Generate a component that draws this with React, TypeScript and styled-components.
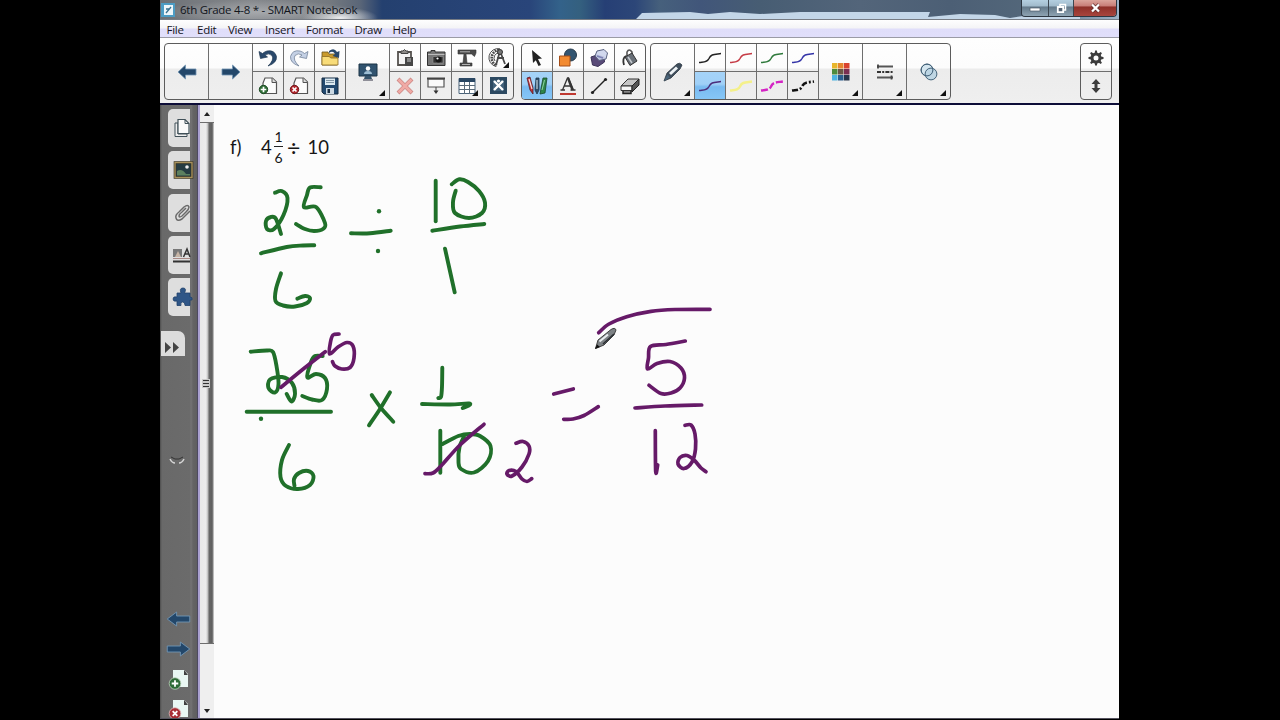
import React from 'react';
import styled, { createGlobalStyle } from 'styled-components';

const GlobalStyle = createGlobalStyle`
  * { box-sizing: border-box; }
  body { margin: 0; background: #000; }
  svg { display: block; overflow: visible; }
`;

const Stage = styled.div`
  display: flex;
  justify-content: center;
  width: 1280px;
  height: 720px;
  overflow: hidden;
  background: #000;
`;

const AppWindow = styled.div`
  display: flex;
  flex-direction: column;
  width: 960px;
  height: 720px;
  background: #fcfcfc;
  border-right: 1px solid #000;
  font-family: 'Open Sans', 'Noto Sans', sans-serif;
`;

/* ---------- title bar ---------- */

const TitleBar = styled.header`
  position: relative;
  display: flex;
  align-items: center;
  height: 20px;
  border-bottom: 1px solid #777c84;
  background:
    radial-gradient(ellipse 100px 12px at 100px 12px, rgba(190, 192, 195, 0.6), transparent),
    radial-gradient(ellipse 38px 11px at 180px 18px, rgba(245, 246, 247, 0.95), transparent),
    linear-gradient(90deg, #6d7176 0, #85888c 90px, #74797f 170px, #5a6678 200px, #24406f 222px,
      #29457a 370px, #33628a 400px, #34607f 420px, #263f75 445px, #2c4678 475px, #46607c 500px,
      #41567a 540px, #475d73 600px, #53657a 700px, #4c5f75 790px, #53677a 870px, #9eb4c8 960px);
`;

const TitleGlow = styled.svg`
  position: absolute;
  left: 0;
  bottom: 0;
`;

const TitleIcon = styled.svg`
  position: relative;
  margin-left: 1px;
`;

const TitleText = styled.span`
  position: relative;
  flex: 1;
  margin-left: 5px;
  font-size: 11.5px;
  line-height: 19px;
  letter-spacing: -0.27px;
  white-space: pre;
  color: #11151c;
`;

const WindowButtons = styled.div`
  position: relative;
  display: flex;
  align-self: flex-start;
  height: 17px;
  margin-right: 2px;
  border: 1px solid #2d3742;
  border-top: 0;
  border-radius: 0 0 4px 4px;
  overflow: hidden;
`;

const WindowButton = styled.div<{ $w: number; $close?: boolean }>`
  display: flex;
  align-items: center;
  justify-content: center;
  width: ${(p) => p.$w}px;
  border-left: ${(p) => (p.$w === 26 ? 0 : 1)}px solid #3c4650;
  background: ${(p) =>
    p.$close
      ? 'linear-gradient(#dba59c 0, #c9807a 35%, #8f3029 45%, #a8453d 100%)'
      : 'linear-gradient(#b4cfe0 0, #a2bccd 35%, #647a8b 45%, #8ea3b2 100%)'};
`;

/* ---------- menu ---------- */

const MenuBar = styled.nav`
  display: flex;
  height: 18px;
  padding-left: 6.5px;
  border-bottom: 1px solid #9b9ba6;
  background: linear-gradient(#fefefe 0, #f4f4f6 8px, #e0defa 9px, #e1dffb 17px);
`;

const MenuItem = styled.span<{ $w: number }>`
  width: ${(p) => p.$w}px;
  font-size: 11.5px;
  line-height: 19px;
  letter-spacing: -0.25px;
  white-space: nowrap;
  color: #14141a;
`;

/* ---------- toolbar ---------- */

const Toolbar = styled.div`
  display: flex;
  height: 67px;
  padding: 5px 7px 0 4px;
  border-bottom: 2px solid #0d0d38;
  background: linear-gradient(#fefefe 0, #fcfcfc 30px, #ececec 31px, #efefef 100%);
`;

const ToolGroup = styled.div<{ $gap?: string }>`
  display: flex;
  height: 57px;
  margin-left: ${(p) => p.$gap || '0'};
  border: 1px solid #5c5c5c;
  border-radius: 4px;
  overflow: hidden;
`;

const LargeTool = styled.div<{ $first?: boolean }>`
  position: relative;
  display: flex;
  align-items: center;
  justify-content: center;
  width: ${(p) => (p.$first ? 43 : 44)}px;
  border-left: ${(p) => (p.$first ? 0 : 1)}px solid #6e6e6e;
`;

const ToolColumn = styled.div<{ $first?: boolean }>`
  display: flex;
  flex-direction: column;
  width: ${(p) => (p.$first ? 30 : 31)}px;
  border-left: ${(p) => (p.$first ? 0 : 1)}px solid #6e6e6e;
`;

const SmallTool = styled.div<{ $active?: boolean }>`
  position: relative;
  display: flex;
  align-items: center;
  justify-content: center;
  height: 27px;
  background: ${(p) => (p.$active ? 'linear-gradient(#a5d3f8 0, #a0d0f7 45%, #79bbf1 55%, #86c6f7 100%)' : 'transparent')};
  & + & {
    height: 28px;
    border-top: 1px solid #6e6e6e;
  }
`;

const Corner = styled.i`
  position: absolute;
  right: 4px;
  bottom: 3px;
  border-style: solid;
  border-width: 0 0 6px 6px;
  border-color: transparent transparent #111 transparent;
`;

/* ---------- workspace ---------- */

const Workspace = styled.div`
  display: flex;
  height: 613px;
`;

const Sidebar = styled.aside`
  display: flex;
  flex-direction: column;
  width: 38px;
  padding-top: 4px;
  background: linear-gradient(90deg, #4d4d4d 0, #696969 2px, #6b6b6b 30px, #747474 31px, #646464 33px, #5f5f5f 37px, #3a3560 38px);
`;

const SideTab = styled.div`
  display: flex;
  align-items: center;
  justify-content: flex-end;
  width: 22px;
  height: 38px;
  margin: 0 0 4.3px 8px;
  border-radius: 5px 0 0 5px;
  background: #dedede;
`;

const Expander = styled.div`
  display: flex;
  align-items: center;
  width: 24px;
  height: 25px;
  margin: 11px 0 0 1px;
  padding: 8px 0 0 4px;
  border-radius: 0 7px 0 0;
  background: #dcdcdc;
`;

const DragMark = styled.div`
  margin: 99px 0 0 10px;
`;

const PageTurns = styled.div`
  display: flex;
  flex-direction: column;
  gap: 14px;
  margin: auto 0 13px 6px;
`;

const PageActions = styled.div`
  display: flex;
  flex-direction: column;
  gap: 10px;
  margin: 0 0 -2px 8px;
`;

const ScrollRail = styled.div`
  display: flex;
  flex-direction: column;
  align-items: center;
  width: 16px;
  border-left: 2px solid #a9a0cf;
  background: #efefef;
`;

const ScrollArrow = styled.div<{ $down?: boolean }>`
  width: 0;
  height: 0;
  margin: ${(p) => (p.$down ? 'auto 0 5px' : '7px 0 6px')};
  border: 3px solid transparent;
  border-width: ${(p) => (p.$down ? '4px 3px 0' : '0 3px 4px')};
  border-${(p) => (p.$down ? 'top' : 'bottom')}-color: #222;
`;

const ScrollThumb = styled.div`
  display: flex;
  flex-direction: column;
  align-items: center;
  justify-content: center;
  width: 14px;
  height: 522px;
  padding-right: 2px;
  border-top: 1px solid #6d6d6d;
  border-bottom: 1px solid #6d6d6d;
  background: linear-gradient(90deg, #e9e9e9 0, #ededed 6px, #b8b8b8 8px, #686868 9px, #606060 12px, #888 13px, #eee 14px);
`;

const Grip = styled.div`
  display: flex;
  flex-direction: column;
  gap: 2px;
  padding: 1px;
  width: 8px;
  background: #c9c9c9;
`;

const GripLine = styled.i`
  height: 1px;
  background: #333;
`;

const Page = styled.main`
  position: relative;
  flex: 1;
  padding: 25px 0 0 16px;
  background: #fcfcfc;
`;

const Problem = styled.div`
  display: flex;
  align-items: center;
  height: 34px;
  font-family: Lato, sans-serif;
  font-size: 18.5px;
  line-height: 34px;
  color: #161616;
`;

const Label = styled.span<{ $w: number; $size?: number }>`
  width: ${(p) => p.$w}px;
  font-size: ${(p) => p.$size || 18.5}px;
  white-space: nowrap;
`;

const Fraction = styled.span`
  display: flex;
  flex-direction: column;
  align-items: center;
  width: 9px;
  margin: 0 4px 0 2px;
  font-size: 14px;
  line-height: 16px;
`;

const FractionBar = styled.i`
  width: 9px;
  height: 1px;
  margin: 1px 0 3px;
  background: #222;
`;

const Ink = styled.svg`
  position: absolute;
  inset: 0;
`;

const BottomEdge = styled.footer`
  height: 2px;
  background: linear-gradient(#55535f 1px, #000 1px);
`;

/* ---------- icons ---------- */

const NAVY = '#23476a';

const ArrowIcon = ({ flip, w = 20 }: { flip?: boolean; w?: number }) => (
  <svg width={w} height={16} viewBox="0 0 20 16" preserveAspectRatio="none">
    <path
      transform={flip ? 'translate(20 0) scale(-1 1)' : undefined}
      d="M1 8 8.5 1V5H19V11H8.5V15Z"
      fill={NAVY}
      stroke="#7195b4"
      strokeWidth=".8"
    />
  </svg>
);

const UndoIcon = ({ redo }: { redo?: boolean }) => (
  <svg width="20" height="20" viewBox="0 0 20 20">
    <g transform={redo ? 'translate(20 0) scale(-1 1)' : undefined}>
      <path
        d="M1 3.5 2.5 10.500 9.500 9 7 7Q11 4.500 14 7.500 16.500 12 10 18 19 15 18.500 8.500 16.500 1.500 9 3 6.500 3.700 4.500 5.500Z"
        fill={redo ? '#c4d0e4' : '#29486b'}
        stroke={redo ? '#65778f' : '#1f3852'}
        strokeWidth=".7"
      />
    </g>
  </svg>
);

const FolderIcon = () => (
  <svg width="20" height="20" viewBox="0 0 20 20">
    <path d="M2 4H8L9 6H17V17H2Z" fill="#c99a2c" stroke="#6b551f" strokeWidth=".8" />
    <path d="M9 3Q14-1 17 4L19.500 3 19 10 12.500 8 15 6Q13 2 9 5Z" fill="#29486b" />
    <path d="M2 17V8.500H9L11 10H18V17Z" fill="#f8dc79" stroke="#8a6b22" strokeWidth=".8" />
  </svg>
);

const PageIcon = ({ remove }: { remove?: boolean }) => (
  <svg width="20" height="20" viewBox="0 0 20 20">
    <path d="M7 2H14.500L18.500 6V17.500H5V7Z" fill="#fcfcfc" stroke="#555" strokeWidth="1.2" />
    <path d="M14 2V6.500H18.500" fill="#ddd" stroke="#555" />
    <circle cx="5.500" cy="13.500" r="4.200" fill={remove ? '#b3262c' : '#2f6e36'} stroke={remove ? '#70181c' : '#1d4b24'} />
    <path
      d="M5.500 10.700V16.300M2.700 13.500H8.300"
      transform={remove ? 'rotate(45 5.500 13.500)' : undefined}
      stroke="#fff"
      strokeWidth="1.7"
    />
  </svg>
);

const SidePageIcon = ({ remove }: { remove?: boolean }) => (
  <svg width="20" height="20" viewBox="0 0 20 20">
    <path d="M5 0H16L20 4V17H5Z" fill="#e9f7f3" />
    <path d="M16 0V5H20Z" fill="#404040" />
    <circle cx="7" cy="13.500" r="5.800" fill={remove ? '#a92f35' : '#2f6b38'} stroke={remove ? '#ddb9ba' : '#bad0b9'} strokeWidth=".8" />
    <path d="M7 10.200V16.800M3.700 13.500H10.300" transform={remove ? 'rotate(45 7 13.500)' : undefined} stroke="#fff" strokeWidth="1.8" />
  </svg>
);

const SaveIcon = () => (
  <svg width="18" height="18" viewBox="0 0 18 18">
    <path d="M1 1H17V17H3L1 15Z" fill="#234a70" stroke="#162c42" />
    <path d="M4 1.500H14V8H4Z" fill="#dce9f0" />
    <path d="M5 3.500H13M5 5.500H13" stroke="#8095a5" />
    <path d="M5 11H13V17H5Z" fill="#ccd9e3" />
    <path d="M6.500 12H9V16H6.500Z" fill="#182d42" />
  </svg>
);

const ScreenIcon = () => (
  <svg width="20" height="18" viewBox="0 0 20 18">
    <path d="M1 1H19V13H1Z" fill="#31536f" stroke="#1d3447" />
    <path d="M7 13H13L14 16H6Z" fill="#36536a" />
    <circle cx="10" cy="5.500" r="2.200" fill="#fff" />
    <path d="M6 11Q6 8 10 8 14 8 14 11Z" fill="#9dbdd2" />
    <path d="M5 17H15" stroke="#334" />
  </svg>
);

const PasteIcon = () => (
  <svg width="20" height="20" viewBox="0 0 20 20">
    <path d="M3 4H16V17H3Z" fill="#f4f4f4" stroke="#55524e" strokeWidth="1.800" />
    <path d="M6 5.500V3H8Q9.500 0 11 3H13V5.500Z" fill="#8d8b88" stroke="#444" />
    <path d="M10 9H18V18H10Z" fill="#464646" />
    <path d="M12 11H16M12 13H16" stroke="#ccc" />
  </svg>
);

const CameraIcon = () => (
  <svg width="20" height="20" viewBox="0 0 20 20">
    <path d="M1.500 4H5V2.500H9V4H19V17.500H1.500Z" fill="#777" stroke="#333" />
    <path d="M2 6.500H18.500" stroke="#bbb" />
    <path d="M7 8.500H17V15H7Z" fill="#333" stroke="#999" strokeWidth=".6" />
    <circle cx="12.500" cy="11.500" r="3" fill="#161616" />
    <circle cx="11.500" cy="10.500" r="1.100" fill="#fff" />
  </svg>
);

const DocCamIcon = () => (
  <svg width="20" height="20" viewBox="0 0 20 20">
    <path d="M1 2H19V5L17.500 8.500 14.500 6H9L10 15H15V18H3V15H6L7 6H1Z" fill="#4a4a4a" stroke="#333" strokeWidth=".6" />
    <path d="M5 16.500H13M3 3.800H13" stroke="#c9c9c9" strokeWidth=".8" />
  </svg>
);

const MeasureIcon = () => (
  <svg width="22" height="20" viewBox="0 0 22 20">
    <g fill="none" stroke="#4a4a4a">
      <path d="M12 2A8 8 0 0 0 10 17.500" strokeWidth="2.600" strokeDasharray="1.800 .8" />
      <path d="M13 .8A9 9 0 0 0 9 18.500M12 5A5 5 0 0 0 8 13" strokeWidth="1" />
      <path d="M13 3 9 17M13 3 18 16M10 10H17" strokeWidth="1.800" />
    </g>
    <circle cx="13" cy="4" r="2.500" fill="#777" stroke="#333" />
  </svg>
);

const DeleteIcon = () => (
  <svg width="18" height="18" viewBox="0 0 18 18">
    <path d="M2 2 16 16M16 2 2 16" stroke="#c98480" strokeWidth="4" />
    <path d="M2.500 2.500 15.500 15.500M15.500 2.500 2.500 15.500" stroke="#f0aaa5" strokeWidth="2.800" />
  </svg>
);

const ShadeIcon = () => (
  <svg width="20" height="20" viewBox="0 0 20 20">
    <path d="M2 3H18V11H2Z" fill="#fafafa" stroke="#555" strokeWidth="1.200" />
    <path d="M1 2.500H19" stroke="#444" strokeWidth="2" />
    <path d="M10 11V16" stroke="#444" />
    <path d="M7.500 14.500H12.500L10 18Z" fill="#333" />
  </svg>
);

const TableIcon = () => (
  <svg width="18" height="18" viewBox="0 0 18 18">
    <path d="M1 1.500H17V16.500H1Z" fill="#fff" stroke="#49637a" />
    <path d="M1 1H17V5H1Z" fill="#2a4763" />
    <path d="M1 8.500H17M1 12.500H17M6.500 5V17M11.500 5V17" stroke="#5a6b79" />
  </svg>
);

const AddOnIcon = () => (
  <svg width="17" height="17" viewBox="0 0 17 17">
    <path d="M0 0H17V17H0Z" fill="#2c4961" />
    <path d="M3 3H14V14H3Z" fill="#41617a" />
    <path d="M4 4 13 13M13 4 4 13" stroke="#fff" strokeWidth="2.400" />
    <circle cx="8.500" cy="4" r="1.600" fill="#fff" />
  </svg>
);

const CursorIcon = () => (
  <svg width="14" height="18" viewBox="0 0 14 18">
    <path d="M2 1 12 9.500 8 10 11 16 8.500 17 5.800 11.200 3 14Z" fill="#222" />
  </svg>
);

const ShapesIcon = () => (
  <svg width="20" height="20" viewBox="0 0 20 20">
    <circle cx="12.500" cy="7" r="6" fill="#335571" stroke="#26394a" />
    <path d="M1.500 8H12V18H1.500Z" fill="#f28a30" stroke="#a44e18" />
  </svg>
);

const PolygonsIcon = () => (
  <svg width="20" height="20" viewBox="0 0 20 20">
    <path d="M2 9 8 7 15 9 15.500 14 9 18.500 3.500 17Z" fill="#594b78" stroke="#3c3358" />
    <path d="M8 3 15 1.500 18.500 5 17 11 10 12.500 6 8Z" fill="#ccd4ec" fillOpacity=".9" stroke="#58617f" />
    <path d="M8 8 14 10" fill="none" stroke="#7a80b4" strokeWidth="1.400" />
  </svg>
);

const FillIcon = () => (
  <svg width="20" height="20" viewBox="0 0 20 20">
    <path d="M7 8V4Q9 0 12 4V9" fill="none" stroke="#555" strokeWidth="1.600" />
    <path d="M5 9 12 5 17 13 10 17.500Z" fill="#697078" stroke="#333" />
    <path d="M8 9 12 15" stroke="#c6cbd0" strokeWidth="1.500" />
    <path d="M6 8Q2 10 4 17" fill="none" stroke="#333" strokeWidth="1.800" />
  </svg>
);

const PensIcon = () => (
  <svg width="22" height="20" viewBox="0 0 22 20">
    <path d="M1 2 4 1 7 12 7 18 4 14Z" fill="#bf3038" stroke="#592026" strokeWidth=".8" />
    <path d="M3 3 6 13" stroke="#f4dede" strokeWidth="1.200" />
    <path d="M10 2H13V14L11 18 9 14Z" fill="#34516d" stroke="#20394f" strokeWidth=".8" />
    <path d="M11 4V13" stroke="#dce8ef" />
    <path d="M17 2 21 2 19 17 14 18Z" fill="#2e8549" stroke="#17472a" strokeWidth=".8" />
    <path d="M18.500 4 16 14" stroke="#8fd3a4" />
  </svg>
);

const TextToolIcon = () => (
  <svg width="18" height="20" viewBox="0 0 18 20">
    <path d="M3.500 14 8.500 2 9.500 2 14.500 14M5.500 10H12M1.500 14H6M11.500 14H16.500" fill="none" stroke="#333" strokeWidth="1.300" />
    <path d="M9 2 13.500 14" stroke="#333" strokeWidth="2.200" />
    <path d="M1 18H17" stroke="#c03a32" strokeWidth="2" />
  </svg>
);

const LineIcon = () => (
  <svg width="18" height="18" viewBox="0 0 18 18">
    <path d="M2 16 16 2" stroke="#222" strokeWidth="1.400" />
    <circle cx="2.500" cy="15.500" r="1.600" fill="#222" />
    <circle cx="15.500" cy="2.500" r="1.600" fill="#222" />
  </svg>
);

const EraserIcon = () => (
  <svg width="20" height="18" viewBox="0 0 20 18">
    <path d="M8 2H19L12 9H1Z" fill="#c6c6c6" stroke="#333" />
    <path d="M1 9H12V13.500H1Z" fill="#f5f5f5" stroke="#333" />
    <path d="M12 9 19 2V8L12 15Z" fill="#555" stroke="#222" />
    <path d="M3 14V16.500H11V14" stroke="#222" strokeWidth="1.500" fill="#888" />
  </svg>
);

const PenIcon = () => (
  <svg width="20" height="20" viewBox="0 0 20 20">
    <path d="M1 19 4 11 14 2Q17 0 19 3L17 7 8 16Z" fill="#3f4e5c" stroke="#2d3741" strokeWidth=".8" />
    <path d="M7 12 14 5.500" stroke="#eef3f6" strokeWidth="3" />
    <path d="M1 19 4.500 12.500 7 15.500Z" fill="#4a647a" />
  </svg>
);

const Squiggle = ({ color, w = 1.5, dash }: { color: string; w?: number; dash?: string }) => (
  <svg width="24" height="12" viewBox="0 0 24 12">
    <path
      d="M1 10.500C6 9.800 9 10.500 11 6.500 13 2 16 2.500 23 1.500"
      fill="none"
      stroke={color}
      strokeWidth={w}
      strokeDasharray={dash}
    />
  </svg>
);

const SWATCHES = ['#e8b62c', '#e5862f', '#d9432f', '#4d8b3c', '#6b5646', '#7a2f52', '#4fb4e0', '#2c5f8f', '#27354b'];

const PaletteIcon = () => (
  <svg width="18" height="18" viewBox="0 0 18 18">
    {SWATCHES.map((c, i) => (
      <rect key={c} x={(i % 3) * 6} y={Math.floor(i / 3) * 6} width="5.500" height="5.500" fill={c} />
    ))}
  </svg>
);

const LineStyleIcon = () => (
  <svg width="18" height="16" viewBox="0 0 18 16">
    <path d="M1 2.500H17M1 13.500H17" stroke="#555" strokeWidth="1.800" />
    <path d="M1 8H17" stroke="#333" strokeWidth="1.900" strokeDasharray="4 1.200 2 1.200" />
    <path d="M2 .5V4.500M15.500 11.500V15.500" stroke="#444" strokeWidth="1.800" />
  </svg>
);

const OverlapIcon = () => (
  <svg width="18" height="18" viewBox="0 0 18 18">
    <circle cx="7" cy="7" r="5.900" fill="#d5e6ef" stroke="#44637a" />
    <circle cx="11" cy="11" r="5.900" fill="#b4d1e1" fillOpacity=".8" stroke="#44637a" />
    <circle cx="7" cy="7" r="5.900" fill="none" stroke="#44637a" />
  </svg>
);

const GearIcon = () => (
  <svg width="16" height="16" viewBox="0 0 16 16">
    <circle cx="8" cy="8" r="4" fill="none" stroke="#3c3c3c" strokeWidth="3" />
    {[0, 45, 90, 135, 180, 225, 270, 315].map((a) => (
      <path key={a} d="M6.600 3.500 7.100.5H8.900L9.400 3.500Z" fill="#3c3c3c" transform={`rotate(${a} 8 8)`} />
    ))}
  </svg>
);

const MoveIcon = () => (
  <svg width="12" height="16" viewBox="0 0 12 16">
    <path d="M6 1 10.500 6H7.500V10H10.500L6 15 1.500 10H4.500V6H1.500Z" fill="#3c3c3c" />
  </svg>
);

const PagesTabIcon = () => (
  <svg width="16" height="20" viewBox="0 0 16 20">
    <path d="M1 5H4V16H13V18.500H1Z" fill="#eee" stroke="#405058" />
    <path d="M4 1.500H11L15 5.500V15.500H4Z" fill="#fafafa" stroke="#405058" strokeWidth="1.200" />
    <path d="M11 1.500V5.500H15" fill="none" stroke="#405058" />
  </svg>
);

const GalleryTabIcon = () => (
  <svg width="16" height="18" viewBox="0 0 16 18">
    <path d="M1 1.500H18V16.500H1Z" fill="#253c42" stroke="#2f2b20" strokeWidth="2.600" />
    <path d="M1 1.500H18V16.500H1Z" fill="none" stroke="#a8925c" strokeWidth="1.400" />
    <path d="M3 10Q8 7 12 13L16 13V14.500H3Z" fill="#5c805f" />
    <circle cx="13" cy="6" r="1.800" fill="#eee" />
  </svg>
);

const ClipTabIcon = () => (
  <svg width="16" height="18" viewBox="0 0 16 18">
    <path
      d="M16 7 8 15Q3 18 2 14 1 11 5 8L10 3Q14 0 15 3 15 5 12 8L8 12Q5 14 5 12 5 10 8 8L12 4"
      fill="none"
      stroke="#6a6a6a"
      strokeWidth="1.500"
    />
  </svg>
);

const PropertiesTabIcon = () => (
  <svg width="17" height="18" viewBox="0 0 17 18">
    <path d="M0 3H9V11H0Z" fill="#777" />
    <path d="M2 11 5 5 8 11Z" fill="#c6b4a5" />
    <path d="M10.500 11 14 3 17 11M11.500 8H16" fill="none" stroke="#333" strokeWidth="1.500" />
    <path d="M0 12.500H17" stroke="#a98985" />
    <path d="M0 15.500H17" stroke="#333" strokeWidth="2" />
  </svg>
);

const PuzzleTabIcon = () => (
  <svg width="17" height="20" viewBox="0 0 17 20">
    <path
      d="M4 6H8Q6 1 10 1 14 1 11.500 6H17V10Q20 10 19 13L17 13V18.500H12Q12 15 9.500 15 7 15 8 18.500H4V14Q0 15 0 12 0 9 4 10Z"
      fill="#2f5687"
      stroke="#21436c"
      strokeWidth=".8"
    />
  </svg>
);

/* ---------- handwriting ---------- */

type Point = [number, number];

// Catmull-Rom through the sampled pen positions.
const smooth = (pts: Point[]) => {
  let d = `M${pts[0][0]} ${pts[0][1]}`;
  for (let i = 0; i < pts.length - 1; i++) {
    const a = pts[i - 1] || pts[i];
    const b = pts[i];
    const c = pts[i + 1];
    const e = pts[i + 2] || c;
    d += `C${b[0] + (c[0] - a[0]) / 6} ${b[1] + (c[1] - a[1]) / 6} ${c[0] - (e[0] - b[0]) / 6} ${c[1] - (e[1] - b[1]) / 6} ${c[0]} ${c[1]}`;
  }
  return d;
};

const GREEN: Point[][] = [
  [[275, 192.7], [281.700, 191], [287.500, 198], [283.500, 215], [274, 229], [267, 229], [266, 221], [271, 217], [276, 219], [281, 234]],
  [[320.700, 187.300], [310, 187.500], [307, 195], [304, 207.300], [316, 207], [325, 223], [323, 229], [314, 231], [305, 229], [296, 224]],
  [[261, 253.300], [286.700, 247], [303, 245.500], [314.300, 245.300]],
  [[351, 233.300], [370, 233.300], [390.700, 230.700]],
  [[435.700, 180.700], [435.700, 221.300]],
  [[451.700, 184.300], [459.300, 179.300], [468, 182], [479, 191], [485, 202.500], [482, 213], [469, 218], [455, 213], [453, 202], [455.700, 190.700]],
  [[432.300, 230.700], [460, 226.500], [484.300, 224]],
  [[445, 248.700], [454.700, 292.300]],
  [[281, 273.300], [276, 289], [275.500, 301], [283, 305.500], [295, 306.500], [307, 303], [310, 298], [305, 296], [297.300, 298.700]],
  [[250.700, 351.700], [267, 350.500], [273, 352], [276.500, 366], [278.500, 384], [275, 392.500], [268.500, 388], [270, 379.500], [282, 377], [292, 383], [295, 394], [291.500, 401.500], [286.700, 394]],
  [[322.700, 356], [315, 356], [311, 362], [307.300, 377.300], [316, 374], [325, 378], [327, 389], [322, 400], [312, 399.500], [302.300, 396]],
  [[246.700, 411.700], [331, 411.700]],
  [[371.700, 395], [381, 408], [393.300, 421.700]],
  [[390, 392.300], [380, 409], [369, 425.300]],
  [[442.300, 367.700], [442, 386.700], [441, 397], [438.300, 398]],
  [[422, 404], [450, 404.500], [469, 403.500], [468, 406], [462.700, 408]],
  [[440.300, 430.700], [440.300, 472.700]],
  [[442.700, 444], [458.300, 436], [470, 434], [480, 436], [490.500, 446], [488, 461], [474, 472.500], [461, 469], [458.500, 462], [459.500, 447], [465, 435]],
  [[289, 445], [282, 460], [280.500, 477], [286, 486], [298, 489], [310, 485], [313.500, 476], [308, 471], [299, 473], [294, 479], [294.500, 486]],
];

const PURPLE: Point[][] = [
  [[281, 387.300], [302, 370], [325.300, 351.700]],
  [[339, 334], [333, 335], [330.500, 342], [329.500, 354], [338, 347], [347, 342.500], [353, 346], [354, 358], [350, 367.500], [341.700, 369], [335, 366], [332.500, 361.700]],
  [[425, 473.700], [433, 473], [441, 466], [460, 445], [484, 424.300]],
  [[516, 443.300], [523, 441.500], [529, 446], [529, 454], [522, 467], [512, 476], [507, 474], [509, 470.500], [516, 471.500], [522, 479], [527, 481.500], [531.700, 478.700]],
  [[598.700, 332.700], [609, 324], [626.700, 316.700], [651, 311.300], [675, 309.500], [710, 309.300]],
  [[553.700, 394], [573.300, 389]],
  [[563.700, 419.300], [573, 419], [584, 415.500], [598.300, 406.700]],
  [[685.300, 341], [666, 344.500], [650.500, 346.500], [648.500, 358], [647.500, 369], [657, 363.500], [670, 361.500], [681, 368], [684.500, 378], [680, 388], [671, 393], [661, 393.500], [649, 385.300]],
  [[635, 408], [665, 406], [701.700, 405]],
  [[655.300, 430.700], [655.700, 471.700], [657.700, 465]],
  [[685, 425.300], [691, 425], [695, 434], [695.500, 449], [692, 462], [684, 468.500], [678, 464], [680, 457.500], [687, 455.500], [694, 460], [701, 468], [706, 471.700]],
];

const DOTS: Point[] = [[379, 211.300], [378, 251], [261, 418.700]];

const Handwriting = () => (
  <Ink width="905" height="613" viewBox="214 105 905 613">
    <g fill="none" stroke="#20702a" strokeWidth="3.900" strokeLinecap="round" strokeLinejoin="round">
      {GREEN.map((s, i) => (
        <path key={i} d={smooth(s)} />
      ))}
    </g>
    {DOTS.map(([x, y]) => (
      <circle key={y} cx={x} cy={y} r="2.200" fill="#20702a" />
    ))}
    <g fill="none" stroke="#661a68" strokeWidth="3.700" strokeLinecap="round" strokeLinejoin="round">
      {PURPLE.map((s, i) => (
        <path key={i} d={smooth(s)} />
      ))}
    </g>
    <path d="M595.500 348.500 598 340 611 329.500Q615 327 616 330L614 335 604 345Z" fill="#7d8285" stroke="#333" strokeWidth=".9" />
    <path d="M599.500 341.500 608 334.500" stroke="#e9edef" strokeWidth="2.200" />
    <path d="M603 344 614 334" stroke="#2b2f33" strokeWidth="1.500" />
    <path d="M595 349 597 344.500 600 347Z" fill="#111" />
  </Ink>
);

/* ---------- page ---------- */

const MENUS: [string, number][] = [
  ['File', 30.500],
  ['Edit', 31],
  ['View', 37],
  ['Insert', 41],
  ['Format', 48.500],
  ['Draw', 38],
  ['Help', 40],
];

const Pair = ({
  top,
  bottom,
  first,
  activeBottom,
  corner,
}: {
  top: React.ReactNode;
  bottom: React.ReactNode;
  first?: boolean;
  activeBottom?: boolean;
  corner?: 'top' | 'bottom';
}) => (
  <ToolColumn $first={first}>
    <SmallTool>
      {top}
      {corner === 'top' && <Corner />}
    </SmallTool>
    <SmallTool $active={activeBottom}>
      {bottom}
      {corner === 'bottom' && <Corner />}
    </SmallTool>
  </ToolColumn>
);

export default function App() {
  return (
    <Stage>
      <GlobalStyle />
      <AppWindow>
        <TitleBar>
          <TitleGlow width="959" height="8" viewBox="0 0 959 8">
            <path
              d="M476 8 482 2 530 1 548 3 570 1 600 3 640 1 770 1 768 6 800 3 835 4 850 7 870 4 890 6 920 3 920 8Z"
              fill="#c3d6e8"
            />
          </TitleGlow>
          <TitleIcon width="14" height="16" viewBox="0 0 14 16">
            <path d="M0 1H14V15H0Z" fill="#4d9cc4" />
            <path d="M3 3H12V13H3Z" fill="#eef6fa" />
            <path d="M5 11 10 5M5 7H8" stroke="#37708f" strokeWidth="1.300" />
          </TitleIcon>
          <TitleText>6th Grade 4-8 * - SMART Notebook</TitleText>
          <WindowButtons>
            <WindowButton $w={26}>
              <svg width="12" height="8" viewBox="0 0 12 8">
                <path d="M1 4H11V7H1Z" fill="#fff" stroke="#4b5a68" strokeWidth=".7" />
              </svg>
            </WindowButton>
            <WindowButton $w={25}>
              <svg width="11" height="11" viewBox="0 0 11 11">
                <path d="M4 3V1.500H9.500V7H8" fill="none" stroke="#fff" strokeWidth="1.500" />
                <path d="M1.800 4H7.200V9.200H1.800Z" fill="#566575" stroke="#fff" strokeWidth="1.800" />
              </svg>
            </WindowButton>
            <WindowButton $w={43} $close>
              <svg width="11" height="10" viewBox="0 0 11 10">
                <path d="M2 1.500 9 8.500M9 1.500 2 8.500" stroke="#5d2b2a" strokeWidth="3.600" />
                <path d="M2 1.500 9 8.500M9 1.500 2 8.500" stroke="#fff" strokeWidth="2.300" />
              </svg>
            </WindowButton>
          </WindowButtons>
        </TitleBar>

        <MenuBar>
          {MENUS.map(([name, w]) => (
            <MenuItem key={name} $w={w}>
              {name}
            </MenuItem>
          ))}
        </MenuBar>

        <Toolbar>
          <ToolGroup>
            <LargeTool $first>
              <ArrowIcon />
            </LargeTool>
            <LargeTool>
              <ArrowIcon flip />
            </LargeTool>
            <Pair top={<UndoIcon />} bottom={<PageIcon />} />
            <Pair top={<UndoIcon redo />} bottom={<PageIcon remove />} />
            <Pair top={<FolderIcon />} bottom={<SaveIcon />} />
            <LargeTool>
              <ScreenIcon />
              <Corner />
            </LargeTool>
            <Pair top={<PasteIcon />} bottom={<DeleteIcon />} />
            <Pair top={<CameraIcon />} bottom={<ShadeIcon />} />
            <Pair top={<DocCamIcon />} bottom={<TableIcon />} corner="bottom" />
            <Pair top={<MeasureIcon />} bottom={<AddOnIcon />} corner="top" />
          </ToolGroup>
          <ToolGroup $gap="7px">
            <Pair first top={<CursorIcon />} bottom={<PensIcon />} activeBottom />
            <Pair top={<ShapesIcon />} bottom={<TextToolIcon />} />
            <Pair top={<PolygonsIcon />} bottom={<LineIcon />} />
            <Pair top={<FillIcon />} bottom={<EraserIcon />} />
          </ToolGroup>
          <ToolGroup $gap="4px">
            <LargeTool $first>
              <PenIcon />
              <Corner />
            </LargeTool>
            <Pair top={<Squiggle color="#222" />} bottom={<Squiggle color="#4b2d7c" />} activeBottom />
            <Pair top={<Squiggle color="#c63c46" />} bottom={<Squiggle color="#f4f08a" w={2.5} />} />
            <Pair top={<Squiggle color="#2f7a3c" />} bottom={<Squiggle color="#d424c4" w={2.4} dash="7 2" />} />
            <Pair top={<Squiggle color="#3434a8" />} bottom={<Squiggle color="#111" w={2.600} dash="6 2 2 2" />} />
            <LargeTool>
              <PaletteIcon />
              <Corner />
            </LargeTool>
            <LargeTool>
              <LineStyleIcon />
              <Corner />
            </LargeTool>
            <LargeTool>
              <OverlapIcon />
              <Corner />
            </LargeTool>
          </ToolGroup>
          <ToolGroup $gap="auto">
            <Pair first top={<GearIcon />} bottom={<MoveIcon />} />
          </ToolGroup>
        </Toolbar>

        <Workspace>
          <Sidebar>
            <SideTab><PagesTabIcon /></SideTab>
            <SideTab><GalleryTabIcon /></SideTab>
            <SideTab><ClipTabIcon /></SideTab>
            <SideTab><PropertiesTabIcon /></SideTab>
            <SideTab><PuzzleTabIcon /></SideTab>
            <Expander>
              <svg width="14" height="11" viewBox="0 0 14 11">
                <path d="M0 0 6 5.500 0 11ZM8 0 14 5.500 8 11Z" fill="#444" />
              </svg>
            </Expander>
            <DragMark>
              <svg width="14" height="10" viewBox="0 0 14 10">
                <path d="M0 4Q2 8 5 8M14 4Q12 8 9 8" fill="none" stroke="#d5d5d5" strokeWidth="1.500" />
                <path d="M1 2 5 4H9L13 2" fill="none" stroke="#333" />
              </svg>
            </DragMark>
            <PageTurns>
              <ArrowIcon w={25} />
              <ArrowIcon w={25} flip />
            </PageTurns>
            <PageActions>
              <SidePageIcon />
              <SidePageIcon remove />
            </PageActions>
          </Sidebar>
          <ScrollRail>
            <ScrollArrow />
            <ScrollThumb>
              <Grip>
                <GripLine />
                <GripLine />
                <GripLine />
              </Grip>
            </ScrollThumb>
            <ScrollArrow $down />
          </ScrollRail>
          <Page>
            <Problem>
              <Label $w={31}>f)</Label>
              <Label $w={11}>4</Label>
              <Fraction>
                <span>1</span>
                <FractionBar />
                <span>6</span>
              </Fraction>
              <Label $w={20.500} $size={23}>÷</Label>
              <Label $w={24}>10</Label>
            </Problem>
            <Handwriting />
          </Page>
        </Workspace>
        <BottomEdge />
      </AppWindow>
    </Stage>
  );
}
